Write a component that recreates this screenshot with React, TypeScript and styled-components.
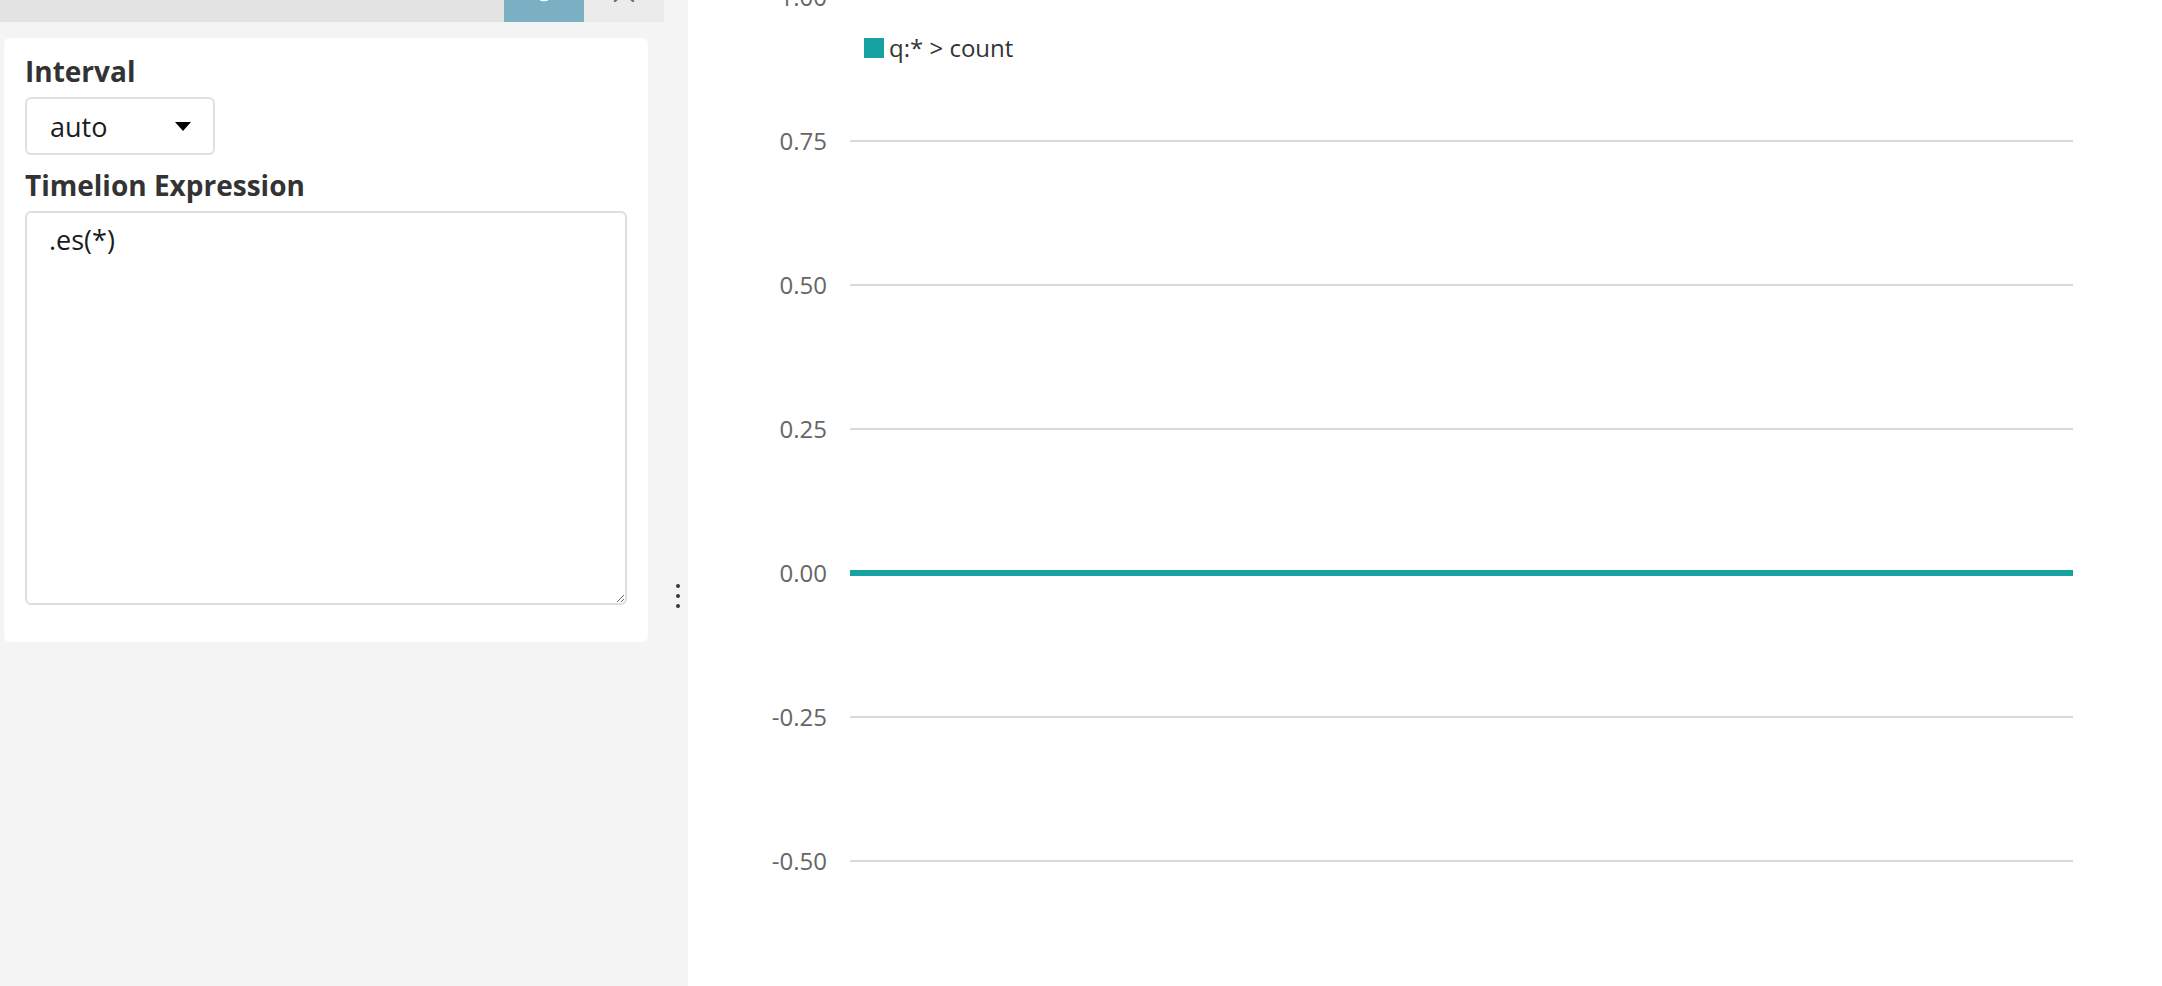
import React from 'react'
import styled, {createGlobalStyle} from 'styled-components'

const GlobalStyle = createGlobalStyle`
    html, body {
        margin: 0;
        padding: 0;
        height: 100%;
        overflow: hidden;
        background: #fff;
    }
    body {
        font-family: 'Open Sans', 'Noto Sans', sans-serif;
        color: #343741;
    }
    * {
        box-sizing: border-box;
    }
`

type AxisTick = {
    label: string
    series?: boolean
}

const ticks: AxisTick[] = [
    {label: '1.00'},
    {label: '0.75'},
    {label: '0.50'},
    {label: '0.25'},
    {label: '0.00', series: true},
    {label: '-0.25'},
    {label: '-0.50'},
]

const App: React.FC = () => {
    return (
        <Page>
            <GlobalStyle/>
            <Sidebar>
                <TabBar>
                    <TabFiller/>
                    <Tab active>
                        <PeekIcon width="22" height="22" viewBox="0 0 22 22" fill="none">
                            <path d="M19 11a8 8 0 1 1-2.3-5.6" stroke="#fff" strokeWidth="2.4" strokeLinecap="round"/>
                        </PeekIcon>
                    </Tab>
                    <Tab>
                        <PeekIcon width="22" height="22" viewBox="0 0 22 22" fill="none">
                            <path d="M2 2l18 18M20 2L2 20" stroke="#69707d" strokeWidth="2.4" strokeLinecap="round"/>
                        </PeekIcon>
                    </Tab>
                </TabBar>

                <EditorCard>
                    <FieldLabel>Interval</FieldLabel>
                    <IntervalSelect type="button">
                        <span>auto</span>
                        <Caret/>
                    </IntervalSelect>

                    <FieldLabel>Timelion Expression</FieldLabel>
                    <ExpressionInput defaultValue=".es(*)" spellCheck={false}/>
                </EditorCard>
            </Sidebar>

            <Resizer>
                <Dot/>
                <Dot/>
                <Dot/>
            </Resizer>

            <ChartPanel>
                <Legend>
                    <Swatch/>
                    <LegendText>q:* &gt; count</LegendText>
                </Legend>

                <Axis>
                    {ticks.map(t => (
                        <AxisRow key={t.label}>
                            <TickLabel>{t.label}</TickLabel>
                            <GridLine series={t.series}/>
                        </AxisRow>
                    ))}
                </Axis>
            </ChartPanel>
        </Page>
    )
}

export default App

const Page = styled.div`
    display: flex;
    height: 100vh;
    overflow: hidden;
`

const Sidebar = styled.div`
    width: 664px;
    flex-shrink: 0;
    background: #f4f4f4;
    display: flex;
    flex-direction: column;
`

const TabBar = styled.div`
    display: flex;
    height: 22px;
    overflow: hidden;
`

const TabFiller = styled.div`
    flex: 1;
    background: #e3e3e3;
`

const Tab = styled.div<{active?: boolean}>`
    width: 80px;
    display: flex;
    justify-content: center;
    align-items: flex-end;
    background: ${props => props.active ? '#7aafc4' : '#ebebeb'};
`

const PeekIcon = styled.svg`
    margin-bottom: 19px;
    flex-shrink: 0;
`

const EditorCard = styled.div`
    margin: 16px 16px 0 4px;
    padding: 12px 21px 37px 21px;
    background: #fff;
    border-radius: 6px;
    display: flex;
    flex-direction: column;
    align-items: flex-start;
`

const FieldLabel = styled.div`
    font-family: 'Open Sans', sans-serif;
    font-weight: 700;
    font-size: 28px;
    line-height: 42px;
    color: #333;
    margin-bottom: 5px;

    & + button {
        margin-bottom: 9px;
    }
`

const IntervalSelect = styled.button`
    width: 190px;
    height: 58px;
    display: flex;
    align-items: center;
    justify-content: space-between;
    padding: 0 22px 0 23px;
    border: 2px solid #e0e0e0;
    border-radius: 6px;
    background: #fff;
    font-family: 'Open Sans', sans-serif;
    font-size: 27px;
    color: #1a1c21;
    cursor: pointer;
`

const Caret = styled.span`
    width: 0;
    height: 0;
    border-left: 8px solid transparent;
    border-right: 8px solid transparent;
    border-top: 9px solid #000;
`

const ExpressionInput = styled.textarea`
    width: 100%;
    height: 394px;
    padding: 7px 22px;
    border: 2px solid #dedede;
    border-radius: 6px;
    font-family: 'Open Sans', sans-serif;
    font-size: 27px;
    line-height: 1.5;
    color: #1a1c21;
    resize: vertical;
    outline: none;
`

const Resizer = styled.div`
    width: 24px;
    flex-shrink: 0;
    background: #f4f4f4;
    display: flex;
    flex-direction: column;
    align-items: center;
    gap: 6px;
    padding: 584px 0 0 3px;
`

const Dot = styled.span`
    width: 4px;
    height: 4px;
    border-radius: 50%;
    background: #343741;
`

const ChartPanel = styled.div`
    flex: 1;
    position: relative;
    background: #fff;
    overflow: hidden;
`

const Legend = styled.div`
    position: absolute;
    top: 38px;
    left: 176px;
    display: flex;
    align-items: center;
    gap: 5px;
`

const Swatch = styled.span`
    width: 20px;
    height: 20px;
    background: #17a2a2;
`

const LegendText = styled.span`
    font-family: 'Open Sans', sans-serif;
    font-size: 24px;
    line-height: 20px;
    color: #333;
`

const Axis = styled.div`
    margin-top: -75px;
`

const AxisRow = styled.div`
    height: 144px;
    display: grid;
    grid-template-columns: 139px 1fr;
    column-gap: 23px;
    align-items: center;
    padding-right: 89px;
`

const TickLabel = styled.span`
    text-align: right;
    font-family: 'Open Sans', sans-serif;
    font-size: 24px;
    line-height: 24px;
    color: #666;
`

const GridLine = styled.div<{series?: boolean}>`
    height: ${props => props.series ? '6px' : '2px'};
    background: ${props => props.series ? '#17a2a2' : '#d9d9d9'};
`
